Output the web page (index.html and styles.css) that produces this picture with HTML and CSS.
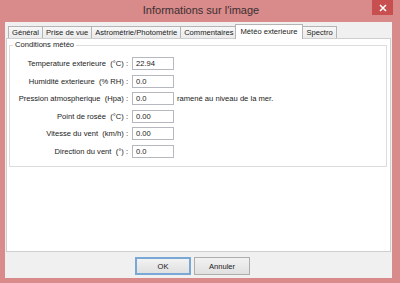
FILE: index.html
```html
<!DOCTYPE html>
<html lang="fr">
<head>
<meta charset="utf-8">
<title>Informations sur l'image</title>
<link rel="stylesheet" href="styles.css">
</head>
<body>
<div class="window">
  <div class="titlebar">
    <span></span>
    <span class="title">Informations sur l'image</span>
    <span class="close">
      <svg width="8" height="8" viewBox="0 0 8 8"><path d="M1 1 L7 7 M7 1 L1 7" stroke="#fff" stroke-width="1.5"/></svg>
    </span>
  </div>
  <div class="client">
    <div class="tabs">
      <span class="tab">Général</span>
      <span class="tab">Prise de vue</span>
      <span class="tab">Astrométrie/Photométrie</span>
      <span class="tab">Commentaires</span>
      <span class="tab active">Météo exterieure</span>
      <span class="tab">Spectro</span>
    </div>
    <div class="page">
      <fieldset class="group">
        <legend>Conditions météo</legend>
        <div class="grid">
          <label>Temperature exterieure&nbsp; (°C) :</label><span class="field">22.94</span><span></span>
          <label>Humidité exterieure&nbsp; (% RH) :</label><span class="field">0.0</span><span></span>
          <label>Pression atmospherique&nbsp; (Hpa) :</label><span class="field">0.0</span><span class="note">ramené au niveau de la mer.</span>
          <label>Point de rosée&nbsp; (°C) :</label><span class="field">0.00</span><span></span>
          <label>Vitesse du vent&nbsp; (km/h) :</label><span class="field">0.00</span><span></span>
          <label>Direction du vent&nbsp; (°) :</label><span class="field">0.0</span><span></span>
        </div>
      </fieldset>
    </div>
    <div class="buttons">
      <button class="btn default">OK</button>
      <button class="btn">Annuler</button>
    </div>
  </div>
</div>
</body>
</html>
```

FILE: styles.css
```css
html, body {
  margin: 0;
  padding: 0;
}
body {
  width: 400px;
  height: 283px;
  overflow: hidden;
  background: #d98a8b;
  font-family: "Liberation Sans", Arial, sans-serif;
  font-size: 7.6px;
  color: #1a1a1a;
}
.window {
  width: 400px;
  height: 283px;
}
.titlebar {
  height: 22px;
  display: grid;
  grid-template-columns: 1fr auto 1fr;
  align-items: start;
}
.title {
  font-size: 11px;
  line-height: 20px;
  color: #3a3030;
  padding-left: 2px;
}
.close {
  justify-self: end;
  margin-right: 7px;
  width: 21px;
  height: 15px;
  background: #c74f50;
  display: flex;
  align-items: center;
  justify-content: center;
}
.client {
  margin: 0 8px 0 5px;
  height: 256px;
  background: #f0f0f0;
  display: flex;
  flex-direction: column;
}
.tabs {
  height: 16px;
  box-sizing: border-box;
  padding: 2px 0 0 3px;
  display: flex;
  align-items: flex-end;
}
.tab {
  height: 12px;
  box-sizing: border-box;
  border: 1px solid #b4b4b4;
  border-bottom: none;
  margin-left: -1px;
  padding: 0 3px;
  line-height: 11px;
  background: linear-gradient(#f7f7f7, #ebebeb);
  white-space: nowrap;
}
.tab:first-child {
  margin-left: 0;
}
.tab.active {
  height: 15px;
  margin: 0 -2px -1px -3px;
  padding: 0 5px;
  line-height: 13px;
  background: #fff;
  position: relative;
  z-index: 1;
}
.tab.active + .tab {
  margin-left: 1px;
}
.page {
  height: 214px;
  box-sizing: border-box;
  margin: 0 1px;
  background: #fff;
  border: 1px solid #cfcfcf;
  padding: 1px 1px 0 2px;
}
.group {
  margin: 0;
  padding: 0 0 8px 0;
  border: 1px solid #dcdcdc;
  width: 378px;
  box-sizing: border-box;
}
.group legend {
  margin-left: 3px;
  padding: 0 2px;
  line-height: 10px;
  color: #1a1a1a;
}
.grid {
  display: grid;
  grid-template-columns: 118px 42px auto;
  column-gap: 4px;
  row-gap: 4.6px;
  padding-top: 7px;
  align-items: center;
}
.grid label {
  text-align: right;
  white-space: nowrap;
}
.field {
  height: 13px;
  box-sizing: border-box;
  border: 1px solid #b5b8bf;
  padding-left: 3px;
  line-height: 11px;
  background: #fff;
}
.note {
  margin-left: -1px;
  white-space: nowrap;
}
.buttons {
  flex: 1;
  display: flex;
  justify-content: center;
  align-items: flex-start;
  padding-top: 5px;
  gap: 3px;
  padding-right: 12px;
}
.btn {
  width: 56px;
  height: 18px;
  box-sizing: border-box;
  border: 1px solid #adadad;
  background: linear-gradient(#f2f2f2, #e0e0e0);
  font-family: "Liberation Sans", Arial, sans-serif;
  font-size: 7.6px;
  color: #1a1a1a;
  padding: 0;
  margin: 0;
}
.btn.default {
  border: 2px solid #79a8d6;
}
```
